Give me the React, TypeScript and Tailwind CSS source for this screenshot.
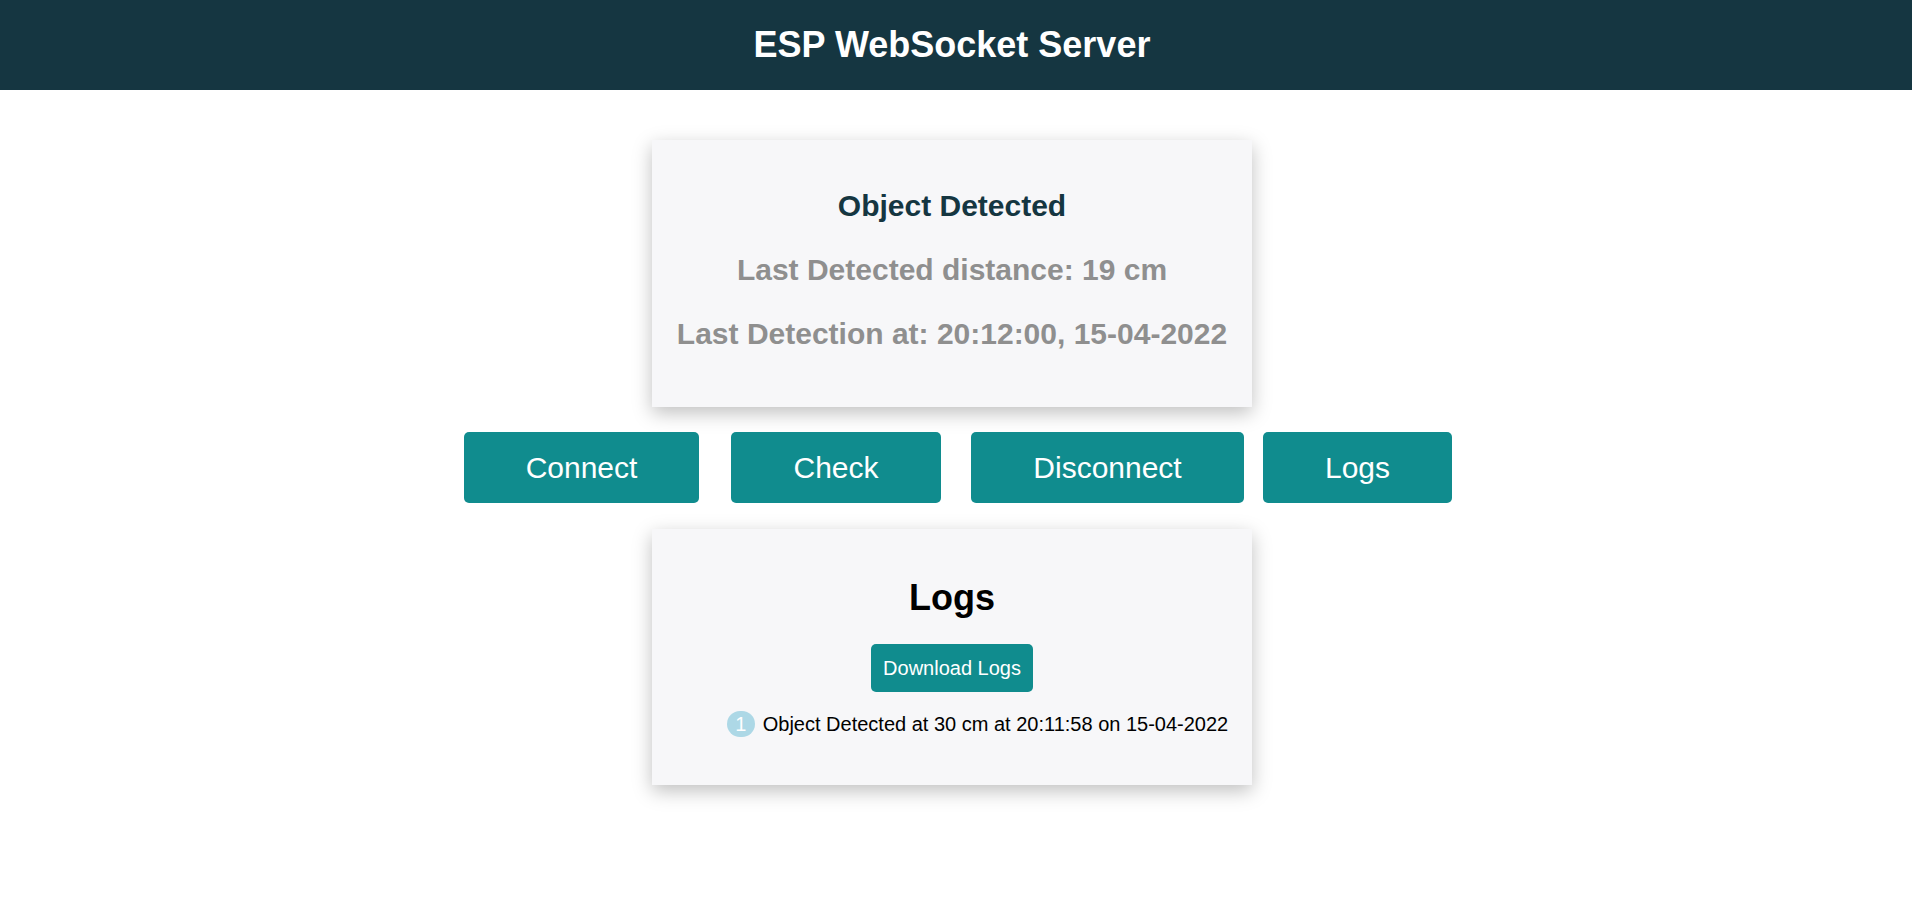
export default function App() {
  return (
    <main className="min-h-screen bg-white font-['Liberation_Sans',Arial,sans-serif]">
      <header className="flex h-[90px] items-center justify-center bg-[#153641] pr-[8px]">
        <h1 className="text-[36px] font-bold text-white">ESP WebSocket Server</h1>
      </header>

      <div className="pr-[8px]">
        <section className="mx-auto mt-[50px] flex h-[267px] w-[600px] flex-col items-center bg-[#f7f7f9] pt-[34px] text-[30px] font-bold shadow-[0_6px_18px_rgba(0,0,0,0.25)]">
          <h2 className="leading-[64px] text-[#153641]">Object Detected</h2>
          <p className="leading-[64px] text-[#8f8f8f]">Last Detected distance: 19 cm</p>
          <p className="leading-[64px] text-[#8f8f8f]">Last Detection at: 20:12:00, 15-04-2022</p>
        </section>

        <div className="mt-[25px] flex justify-center pl-[12px] text-[30px] text-white">
          <button className="mr-[32px] h-[71px] w-[235px] rounded-[5px] bg-[#108c8e]">Connect</button>
          <button className="mr-[30px] h-[71px] w-[210px] rounded-[5px] bg-[#108c8e]">Check</button>
          <button className="mr-[19px] h-[71px] w-[273px] rounded-[5px] bg-[#108c8e]">Disconnect</button>
          <button className="h-[71px] w-[189px] rounded-[5px] bg-[#108c8e]">Logs</button>
        </div>

        <section className="mx-auto mt-[26px] flex h-[256px] w-[600px] flex-col items-center bg-[#f7f7f9] pt-[47px] shadow-[0_6px_18px_rgba(0,0,0,0.25)]">
          <h2 className="text-[36px] font-bold leading-[44px] text-black">Logs</h2>
          <button className="mt-[24px] h-[48px] rounded-[5px] bg-[#108c8e] px-[12px] text-[20px] text-white">
            Download Logs
          </button>
          <ol className="mt-[17px] pl-[51px] text-[20px] text-black">
            <li className="flex items-center gap-[8px]">
              <span className="flex h-[26px] w-[28px] items-center justify-center rounded-full bg-[#add8e6] text-[20px] text-white">
                1
              </span>
              <span>Object Detected at 30 cm at 20:11:58 on 15-04-2022</span>
            </li>
          </ol>
        </section>
      </div>
    </main>
  );
}
